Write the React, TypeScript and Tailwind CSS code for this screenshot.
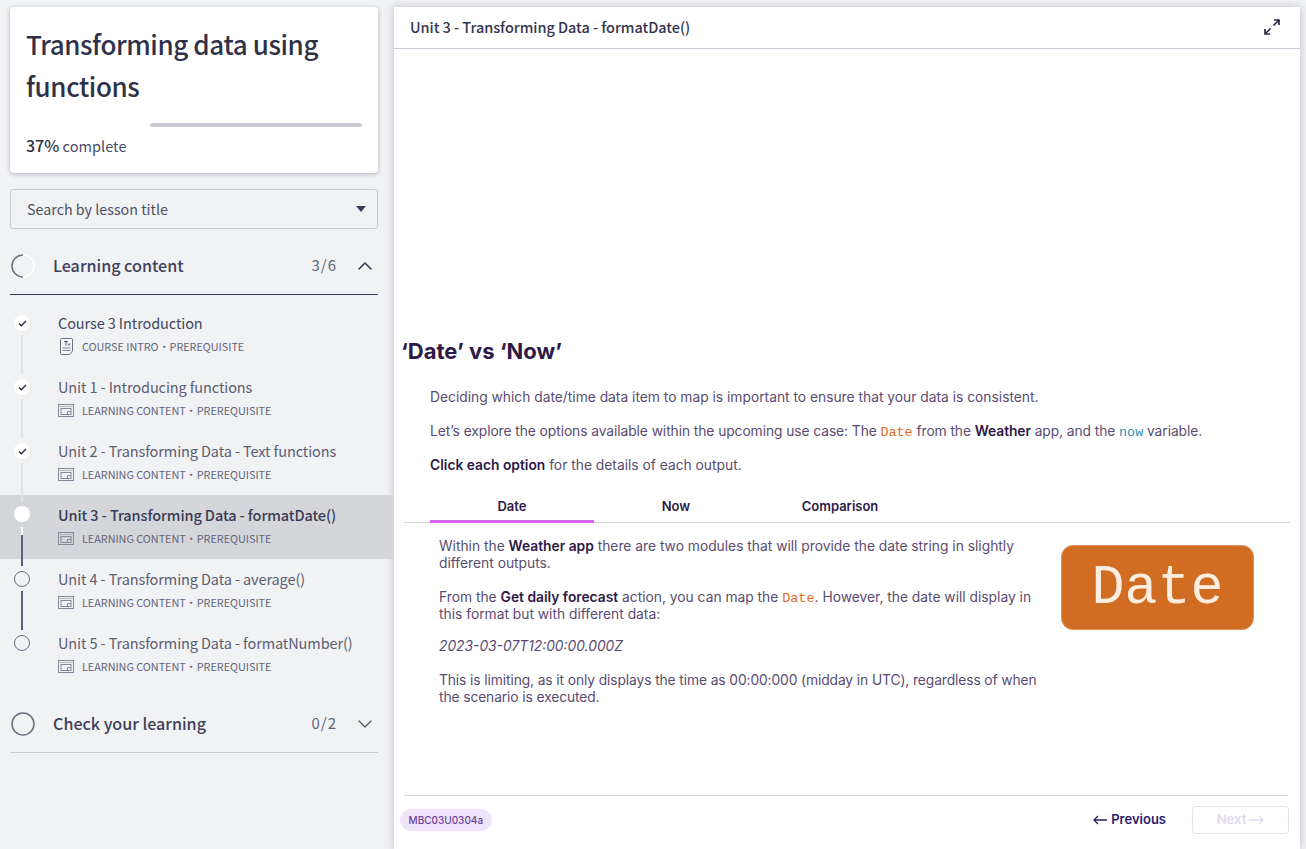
import { ChevronDown, ChevronUp } from "lucide-react";

const sansClass = "font-['Noto_Sans_CJK_SC','Lato',sans-serif]";

const lessons = [
  { title: "Course 3 Introduction", kind: "COURSE INTRO", done: true, line: "light", doc: true },
  { title: "Unit 1 - Introducing functions", kind: "LEARNING CONTENT", done: true, line: "light" },
  { title: "Unit 2 - Transforming Data - Text functions", kind: "LEARNING CONTENT", done: true, line: "light" },
  { title: "Unit 3 - Transforming Data - formatDate()", kind: "LEARNING CONTENT", current: true, line: "dark" },
  { title: "Unit 4 - Transforming Data - average()", kind: "LEARNING CONTENT", line: "dark" },
  { title: "Unit 5 - Transforming Data - formatNumber()", kind: "LEARNING CONTENT" },
];

function DocIcon() {
  return (
    <svg width="13" height="17" viewBox="0 0 13 17" fill="none" className="ml-[2px] shrink-0">
      <path d="M.5 1.5a1 1 0 0 1 1-1h10a1 1 0 0 1 1 1v11.5l-3 3.5h-8a1 1 0 0 1-1-1z" fill="#f6f6f8" stroke="#6c6e84" />
      <path d="M4 3.500h4M6 3.500v4M8 5.500l2 2M10 5.500l-2 2" stroke="#45475f" strokeWidth="0.9" />
      <path d="M2.500 10h8M2.500 12.500h8" stroke="#7d7f93" />
    </svg>
  );
}

function SlideIcon() {
  return (
    <svg width="16" height="13" viewBox="0 0 16 13" fill="none" className="shrink-0">
      <rect x="0.5" y="0.5" width="15" height="12" stroke="#85879a" />
      <path d="M.5 2.500h15" stroke="#b4b5c2" />
      <rect x="3" y="4.500" width="10" height="6" stroke="#85879a" />
      <path d="M9.500 10.500v-3h3.500" stroke="#85879a" />
    </svg>
  );
}

function ExpandIcon() {
  return (
    <svg width="16" height="16" viewBox="0 0 16 16" fill="none">
      <path d="M10 1h5v5M14.500 1.500 9.500 6.500M6 15H1v-5M1.500 14.500 6.500 9.500" stroke="#2c2b4b" strokeWidth="1.700" />
    </svg>
  );
}

function SectionRing({ partial }: { partial?: boolean }) {
  return (
    <svg width="24" height="24" viewBox="0 0 24 24" fill="none" className="shrink-0">
      {partial ? (
        <>
          <circle cx="12" cy="12" r="11" stroke="#ffffff" strokeWidth="1.500" />
          <path d="M12 1A11 11 0 0 0 12 23" stroke="#6b6d84" strokeWidth="1.500" />
        </>
      ) : (
        <circle cx="12" cy="12" r="11" stroke="#6b6d84" strokeWidth="1.500" />
      )}
    </svg>
  );
}

function ArrowLeft({ color }: { color: string }) {
  return (
    <svg width="14" height="10" viewBox="0 0 14 10" fill="none" stroke={color} strokeWidth="1.300">
      <path d="M14 5H1M5 1 1 5l4 4" />
    </svg>
  );
}

function ArrowRight({ color }: { color: string }) {
  return (
    <svg width="15" height="10" viewBox="0 0 15 10" fill="none" stroke={color} strokeWidth="1.300">
      <path d="M0 5h14M10 1l4 4-4 4" />
    </svg>
  );
}

function LessonRow({ lesson }: { lesson: (typeof lessons)[number] }) {
  return (
    <div className={`relative flex h-16 pl-[14px] ${lesson.current ? "bg-[#d5d6da] pt-[11px]" : "pt-[12px]"}`}>
      {lesson.line && (
        <span
          className={`absolute left-[21px] top-[32px] z-10 h-[39px] w-0.5 ${lesson.line === "dark" ? "bg-[#5f6078]" : "bg-[#e2e3e8]"}`}
        >
          {lesson.current && <span className="block h-2 w-0.5 bg-white" />}
        </span>
      )}
      {lesson.done || lesson.current ? (
        <span className="flex h-4 w-4 shrink-0 items-center justify-center rounded-full bg-white">
          {lesson.done && (
            <svg width="9" height="7" viewBox="0 0 9 7" fill="none">
              <path d="M1 3.500 3.300 5.700 8 1" stroke="#2c2b4b" strokeWidth="1.400" />
            </svg>
          )}
        </span>
      ) : (
        <span className="h-4 w-4 shrink-0 rounded-full border border-[#6b6d84]" />
      )}
      <div className={`ml-[28px] min-w-0 ${lesson.current ? "-mt-px" : "-mt-[2px]"}`}>
        <div
          className={`text-[14.500px] leading-[20px] tracking-[-0.1px] whitespace-nowrap ${
            lesson.current ? "font-medium text-[#3a3b55]" : lesson.doc ? "text-[#44465e]" : "text-[#5b5d73]"
          }`}
        >
          {lesson.title}
        </div>
        <div className="mt-[5px] flex h-4 items-center text-[10.800px] leading-4 whitespace-nowrap text-[#63657a]">
          <span className="flex w-6 items-center">{lesson.doc ? <DocIcon /> : <SlideIcon />}</span>
          <span>{lesson.kind}</span>
          <span className="w-[11px] overflow-hidden text-center">·</span>
          <span>PREREQUISITE</span>
        </div>
      </div>
    </div>
  );
}

function Sidebar() {
  return (
    <aside className={`w-[394px] shrink-0 pt-[7px] ${sansClass}`}>
      <div className="mx-[10px] h-[166px] w-[368px] rounded-[4px] bg-white px-4 pt-4 shadow-[0_1px_4px_rgba(50,50,70,0.35)]">
        <h1 className="text-[26px] leading-[42px] font-medium tracking-[-0.4px] text-[#2f3149]">
          Transforming data using functions
        </h1>
        <div className="mt-[16px] flex justify-end">
          <div className="h-1 w-[212px] rounded-[2px] bg-[#c9cad6]" />
        </div>
        <div className="mt-[6px] text-[14.600px] leading-6 text-[#4a4c63]">
          <span className="text-[16px] font-medium text-[#2f3149]">37%</span> complete
        </div>
      </div>

      <div className="mx-[10px] mt-4 flex h-10 w-[368px] items-center justify-between rounded-[3px] border border-[#c9cad6] pr-[11px] pl-4 text-[14.300px] text-[#4d4f66]">
        <span>Search by lesson title</span>
        <span className="h-0 w-0 border-x-[5px] border-t-[6px] border-x-transparent border-t-[#3a3b55]" />
      </div>

      <div className="mx-[10px] mt-[10px] flex h-14 w-[368px] items-center border-b border-[#33344f] pb-[2px]">
        <span className="ml-px">
          <SectionRing partial />
        </span>
        <span className="ml-[18px] flex-1 text-[16.100px] font-medium text-[#3f415a]">Learning content</span>
        <span className="text-[15px] tracking-[1px] text-[#63657a]">3/6</span>
        <ChevronUp size={24} strokeWidth={1.600} className="mr-px ml-[16px] text-[#3a3b55]" />
      </div>

      <div className="mt-2">
        {lessons.map((lesson) => (
          <LessonRow key={lesson.title} lesson={lesson} />
        ))}
      </div>

      <div className="mx-[10px] mt-[10px] flex h-14 w-[368px] items-center border-b border-[#c9cad6] pb-[2px]">
        <span className="ml-px">
          <SectionRing />
        </span>
        <span className="ml-[18px] flex-1 text-[16.100px] font-medium text-[#3f415a]">Check your learning</span>
        <span className="text-[15px] tracking-[1px] text-[#63657a]">0/2</span>
        <ChevronDown size={24} strokeWidth={1.300} className="mr-px ml-[16px] text-[#55576e]" />
      </div>
    </aside>
  );
}

function Code({ children, color = "text-[#e26d1f]" }: { children: string; color?: string }) {
  return <span className={`font-['Liberation_Mono',monospace] text-[13.500px] leading-none ${color}`}>{children}</span>;
}

function Strong({ children }: { children: string }) {
  return <span className="font-semibold text-[#2e1a47]">{children}</span>;
}

function MainPanel() {
  return (
    <main className="mt-[7px] flex h-[842px] w-[906px] shrink-0 flex-col bg-white font-['Inter',sans-serif] shadow-[0_0_8px_rgba(50,50,70,0.25)]">
      <header className={`flex h-[42px] shrink-0 items-center justify-between border-b border-[#c9cad6] pr-5 pb-px pl-4 ${sansClass}`}>
        <span className="text-[14.500px] font-medium tracking-[-0.05px] text-[#35364f]">
          Unit 3 - Transforming Data - formatDate()
        </span>
        <ExpandIcon />
      </header>

      <div className="flex-1 pt-[287px]">
        <h2 className="pl-2 -ml-px text-[22px] leading-[30px] font-bold text-[#2e1a47]">‘Date’ vs ‘Now’</h2>

        <div className="mt-[21px] pl-9 text-[13.800px] leading-[20px] text-[#5a4c70]">
          <p>Deciding which date/time data item to map is important to ensure that your data is consistent.</p>
          <p className="mt-[14px] tracking-[-0.07px]">
            Let’s explore the options available within the upcoming use case: The <Code>Date</Code> from the{" "}
            <Strong>Weather</Strong> app, and the <Code color="text-[#2f8fb0]">now</Code> variable.
          </p>
          <p className="mt-[14px]">
            <Strong>Click each option</Strong> for the details of each output.
          </p>
        </div>

        <div className="mx-[10px] mt-[16px] flex h-[32px] border-b border-[#dacfdf] pl-[26px] text-[13px] font-semibold text-[#2e1a47]">
          <div className="flex h-[32px] w-[164px] items-center justify-center border-b-[3px] border-[#d864f5] pt-[2px]">Date</div>
          <div className="flex h-[31px] w-[164px] items-center justify-center">Now</div>
          <div className="flex h-[31px] w-[164px] items-center justify-center">Comparison</div>
        </div>

        <div className="mt-[15px] flex pr-[46px] pl-[45px]">
          <div className="w-[608px] text-[13.800px] leading-[17px] text-[#5a4c70]">
            <p>
              Within the <Strong>Weather app</Strong> there are two modules that will provide the date string in slightly
              different outputs.
            </p>
            <p className="mt-[17px]">
              From the <Strong>Get daily forecast</Strong> action, you can map the <Code>Date</Code>. However, the date will
              display in this format but with different data:
            </p>
            <p className="mt-[15px] italic">2023-03-07T12:00:00.000Z</p>
            <p className="mt-[17px] tracking-[-0.1px]">
              This is limiting, as it only displays the time as 00:00:000 (midday in UTC), regardless of when the scenario is
              executed.
            </p>
          </div>
          <div className="mt-[7px] ml-[14px] flex h-[85px] w-[193px] shrink-0 items-center justify-center rounded-[12px] border border-[#e0935c] bg-[#d16c23] pt-1 font-['Liberation_Mono',monospace] text-[55px] text-[#fdeee0]">
            Date
          </div>
        </div>
      </div>

      <footer className="mr-[12px] ml-[10px] flex h-[54px] shrink-0 items-center justify-between border-t border-[#dacfdf] pb-[6px]">
        <span className="-ml-1 rounded-full bg-[#f0e4fa] px-[8.500px] py-[4px] text-[10px] leading-[14px] font-medium text-[#6b3fa0]">
          MBC03U0304a
        </span>
        <div className="-mr-px flex items-center text-[13px] font-semibold">
          <span className="flex items-center gap-[4px] text-[#2e1a6e]">
            <ArrowLeft color="#2e1a6e" /> Previous
          </span>
          <span className="ml-[26px] flex h-[28px] w-[97px] items-center justify-center gap-[3px] rounded-[4px] border border-[#e8e0f0] text-[#e2dcee]">
            Next <ArrowRight color="#e2dcee" />
          </span>
        </div>
      </footer>
    </main>
  );
}

export default function App() {
  return (
    <div className="flex h-[849px] w-[1306px] overflow-hidden bg-[#f1f2f4]">
      <Sidebar />
      <MainPanel />
    </div>
  );
}
